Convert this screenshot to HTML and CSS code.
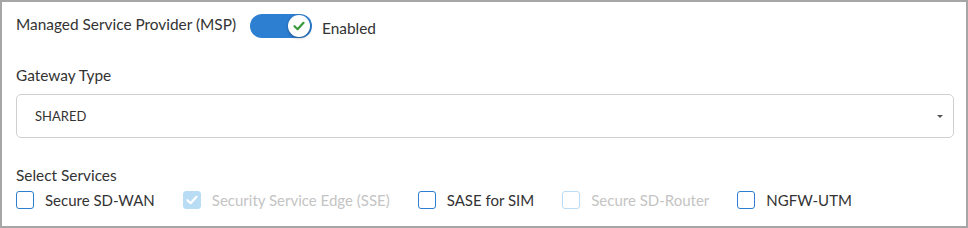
FILE: index.html
```html
<!DOCTYPE html>
<html lang="en">
<head>
    <meta charset="UTF-8">
    <title>Gateway Settings</title>
    <link rel="stylesheet" href="styles.css">
</head>
<body>
    <div class="panel">
        <div class="msp-row">
            <span class="label">Managed Service Provider (MSP)</span>
            <span class="toggle on">
                <span class="knob">
                    <svg width="12" height="10" viewBox="0 0 12 10">
                        <path d="M1.5 5.2 L4.6 8.2 L10.5 1.8" fill="none" stroke="#3a9a3a" stroke-width="2.2" stroke-linecap="round" stroke-linejoin="round"/>
                    </svg>
                </span>
            </span>
            <span class="toggle-text">Enabled</span>
        </div>

        <div class="field">
            <div class="label">Gateway Type</div>
            <div class="select">
                <span>SHARED</span>
                <span class="caret"></span>
            </div>
        </div>

        <div class="field services">
            <div class="label">Select Services</div>
            <div class="checks">
                <label class="check"><span class="box"></span>Secure SD-WAN</label>
                <label class="check disabled checked"><span class="box">
                    <svg width="12" height="10" viewBox="0 0 12 10">
                        <path d="M1.5 5.2 L4.6 8.2 L10.5 1.8" fill="none" stroke="#fff" stroke-width="2.2" stroke-linecap="round" stroke-linejoin="round"/>
                    </svg>
                </span>Security Service Edge (SSE)</label>
                <label class="check"><span class="box"></span>SASE for SIM</label>
                <label class="check disabled"><span class="box"></span>Secure SD-Router</label>
                <label class="check"><span class="box"></span>NGFW-UTM</label>
            </div>
        </div>
    </div>
</body>
</html>
```

FILE: styles.css
```css
* {
    box-sizing: border-box;
}
body {
    margin: 0;
    font-family: Lato, "Noto Sans", sans-serif;
    color: #333;
    background: #fff;
}
.panel {
    width: 968px;
    height: 228px;
    border: 2px solid #a6a6a6;
    padding: 11px 12px 0 14px;
}
.label {
    font-size: 15.4px;
    color: #333;
}
.msp-row {
    display: flex;
    align-items: center;
    height: 26px;
}
.msp-row .label {
    margin-top: -4px;
}
.toggle {
    position: relative;
    width: 62px;
    height: 24px;
    border-radius: 12px;
    background: #2d7fd2;
    margin-left: 14px;
}
.knob {
    position: absolute;
    right: 2px;
    top: 1px;
    width: 22px;
    height: 22px;
    border-radius: 50%;
    background: #fff;
    box-shadow: 0 1px 3px rgba(0, 0, 0, 0.35);
    display: flex;
    align-items: center;
    justify-content: center;
}
.toggle-text {
    font-size: 15.4px;
    margin-left: 10px;
    margin-top: 3px;
}
.field {
    margin-top: 27px;
}
.select {
    margin-top: 10px;
    height: 44px;
    border: 1px solid #d0d0d0;
    border-radius: 5px;
    padding: 0 10px 0 18px;
    display: flex;
    align-items: center;
    justify-content: space-between;
    font-size: 13px;
    color: #333;
}
.caret {
    width: 0;
    height: 0;
    border-left: 3px solid transparent;
    border-right: 3px solid transparent;
    border-top: 3px solid #555;
}
.services {
    margin-top: 28px;
}
.checks {
    display: flex;
    margin-top: 7px;
}
.check {
    display: flex;
    align-items: center;
    font-size: 15px;
    color: #333;
    margin-right: 28px;
}
.box {
    width: 18px;
    height: 18px;
    border: 1.5px solid #2d7fd2;
    border-radius: 3px;
    margin-right: 11px;
    display: flex;
    align-items: center;
    justify-content: center;
}
.check.disabled {
    color: #c4c4c4;
}
.check.disabled .box {
    border-color: #b9dcf5;
}
.check.checked .box {
    background: #b9dcf5;
}
```
